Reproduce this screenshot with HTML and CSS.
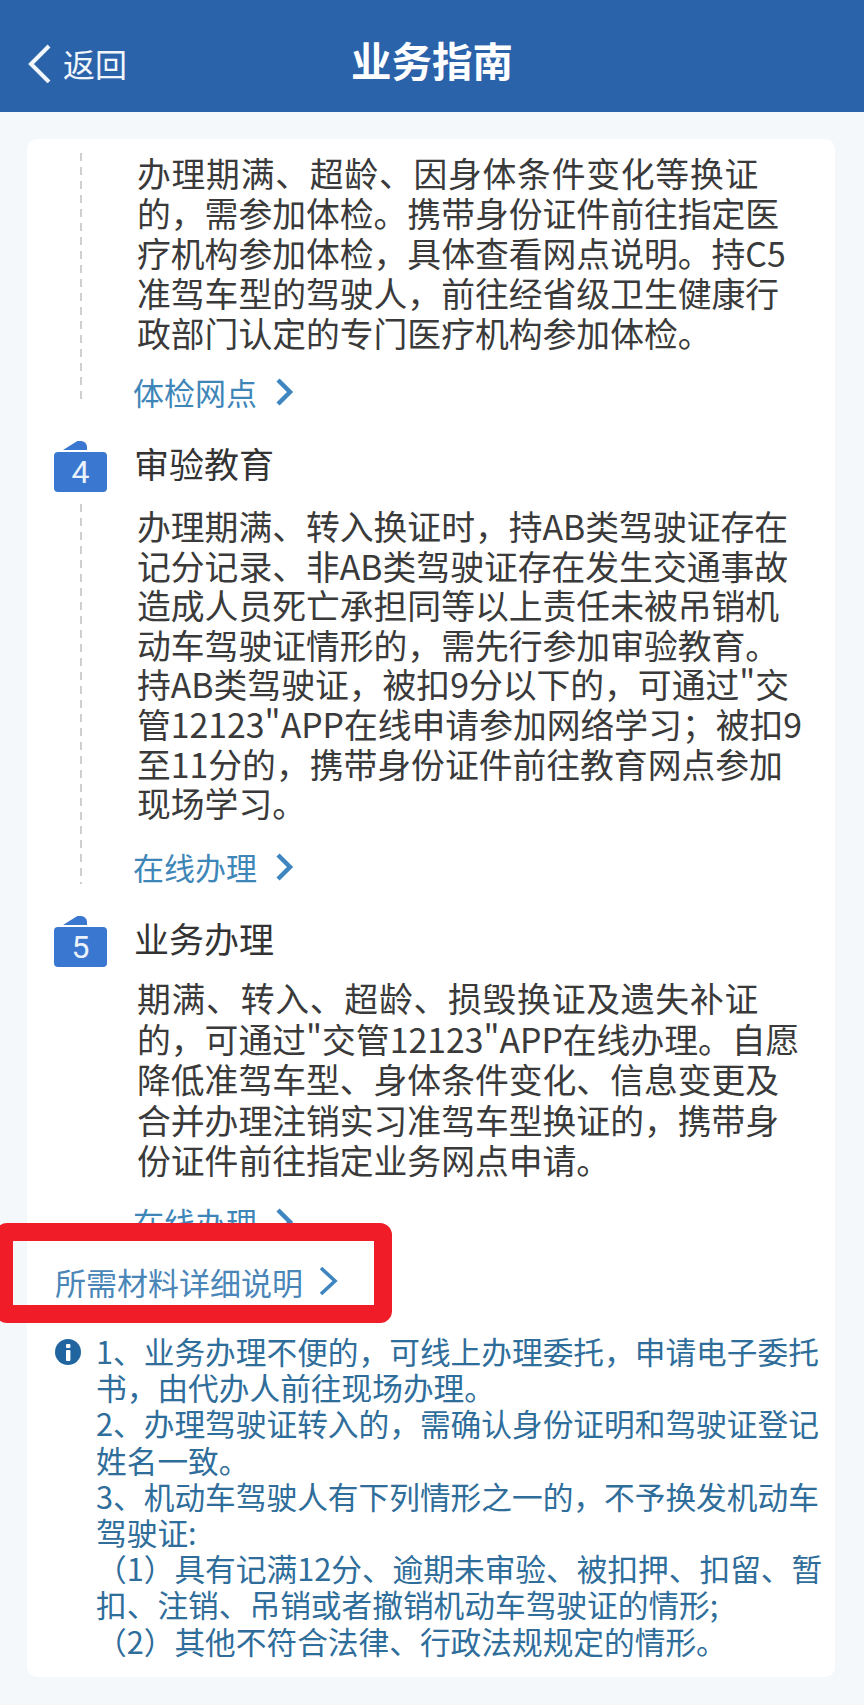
FILE: index.html
```html
<!DOCTYPE html>
<html lang="zh-CN">
<head>
<meta charset="utf-8">
<title>业务指南</title>
<link rel="stylesheet" href="styles.css">
</head>
<body>
<header class="topbar">
  <a class="back">
    <svg class="back-icon" viewBox="0 0 26 40"><path d="M23 3 L5 21 L23 39"/></svg>
    <span>返回</span>
  </a>
  <h1 class="title">业务指南</h1>
</header>
<main class="card">
  <section class="step step-first">
    <div class="rail"><div class="dash dash-first"></div></div>
    <div class="content">
      <p class="body"><span class="loose">办理期满、超龄、因身体条件变化等换证</span><br>的，需参加体检。携带身份证件前往指定医<br>疗机构参加体检，具体查看网点说明。持C5<br>准驾车型的驾驶人，前往经省级卫生健康行<br>政部门认定的专门医疗机构参加体检。</p>
      <a class="link">体检网点<svg class="chev" viewBox="0 0 20 30"><path d="M4 3 L16 15 L4 27"/></svg></a>
    </div>
  </section>
  <section class="step step-mid">
    <div class="rail">
      <div class="badge">4</div>
      <div class="dash dash-mid"></div>
    </div>
    <div class="content">
      <h2 class="step-title">审验教育</h2>
      <p class="body body-mid">办理期满、转入换证时，持AB类驾驶证存在<br>记分记录、非AB类驾驶证存在发生交通事故<br>造成人员死亡承担同等以上责任未被吊销机<br>动车驾驶证情形的，需先行参加审验教育。<br>持AB类驾驶证，被扣9分以下的，可通过"交<br>管12123"APP在线申请参加网络学习；被扣9<br>至11分的，携带身份证件前往教育网点参加<br>现场学习。</p>
      <a class="link">在线办理<svg class="chev" viewBox="0 0 20 30"><path d="M4 3 L16 15 L4 27"/></svg></a>
    </div>
  </section>
  <section class="step step-last">
    <div class="rail">
      <div class="badge">5</div>
    </div>
    <div class="content">
      <h2 class="step-title">业务办理</h2>
      <p class="body body-last"><span class="loose">期满、转入、超龄、损毁换证及遗失补证</span><br>的，可通过"交管12123"APP在线办理。自愿<br>降低准驾车型、身体条件变化、信息变更及<br>合并办理注销实习准驾车型换证的，携带身<br>份证件前往指定业务网点申请。</p>
      <a class="link">在线办理<svg class="chev" viewBox="0 0 20 30"><path d="M4 3 L16 15 L4 27"/></svg></a>
    </div>
  </section>
  <div class="materials">
    <a class="materials-link">所需材料详细说明<svg class="chev chev-thin" viewBox="0 0 20 30"><path d="M3 2 L17 15 L3 28"/></svg></a>
    <div class="highlight"></div>
  </div>
  <section class="notice">
    <svg class="info" viewBox="0 0 26 26"><circle cx="13" cy="13" r="13"/><rect x="11" y="5" width="4.4" height="4" rx="1"/><rect x="11" y="11" width="4.4" height="11" rx="1"/></svg>
    <p class="notice-text">1、业务办理不便的，可线上办理委托，申请电子委托<br>书，由代办人前往现场办理。<br>2、办理驾驶证转入的，需确认身份证明和驾驶证登记<br>姓名一致。<br>3、机动车驾驶人有下列情形之一的，不予换发机动车<br>驾驶证:<br>（1）具有记满12分、逾期未审验、被扣押、扣留、暂<br>扣、注销、吊销或者撤销机动车驾驶证的情形;<br>（2）其他不符合法律、行政法规规定的情形。</p>
  </section>
</main>
</body>
</html>
```
FILE: styles.css
```css
* { box-sizing: border-box; }
html, body { margin: 0; padding: 0; }
body {
  width: 864px;
  height: 1705px;
  overflow: hidden;
  background: #f4f8fa;
  font-family: "Noto Sans CJK SC", "Noto Sans", sans-serif;
}
.topbar {
  height: 112px;
  background: #2b63ab;
  color: #fff;
  display: flex;
  align-items: center;
  justify-content: center;
  position: relative;
}
.back {
  position: absolute;
  left: 26px;
  top: 43px;
  display: flex;
  align-items: center;
  gap: 11px;
  font-size: 32px;
  line-height: 40px;
  color: #f2f6fb;
}
.back-icon { width: 26px; height: 40px; fill: none; stroke: #f2f6fb; stroke-width: 4; }
.title {
  margin: 8px 0 0;
  font-size: 40.5px;
  line-height: 48px;
  font-weight: 700;
}
.card {
  margin: 27px 29px 0 27px;
  height: 1538px;
  background: #fff;
  border-radius: 10px;
  position: relative;
}
.step { display: grid; grid-template-columns: 110px 1fr; }
.rail { padding-left: 27px; display: flex; flex-direction: column; }
.dash {
  flex: 1;
  margin-left: 26px;
  width: 2px;
  background: repeating-linear-gradient(to bottom, #cfcfcf 0 8px, transparent 8px 14px);
}
.dash-first { margin-bottom: 38px; }
.dash-mid { margin-top: 12px; margin-bottom: 32px; }
.step-first { height: 302px; padding-top: 14px; }
.step-mid { height: 475px; }
.step-last { height: 302px; }
.content { white-space: nowrap; }
.body {
  margin: 0;
  font-size: 33.8px;
  line-height: 39.9px;
  color: #3a3a3a;
}
.loose { letter-spacing: 0.76px; }
.body-mid { line-height: 39.6px; margin-top: 21px; }
.body-last { line-height: 40.6px; margin-top: 18px; }
.link {
  display: flex;
  align-items: center;
  margin: 19px 0 0 -4px;
  font-size: 31px;
  line-height: 40px;
  color: #3f86b8;
}
.body-mid + .link { margin-top: 24px; }
.body-last + .link { margin-top: 21px; }
.chev { width: 20px; height: 30px; margin-left: 17px; fill: none; stroke: #3f86c0; stroke-width: 4.5; }
.chev-thin { stroke-width: 3.6; margin-left: 15px; }
.step-title {
  margin: 0 0 0 -3px;
  font-size: 35px;
  line-height: 44px;
  font-weight: 400;
  color: #333;
}
.badge {
  width: 53px;
  height: 40px;
  margin-top: 11px;
  border-radius: 4px;
  background: #3a77d0;
  color: #eaf2fb;
  font-size: 32px;
  line-height: 40px;
  text-align: center;
  position: relative;
  font-family: "Roboto", sans-serif;
  flex: none;
}
.badge::before {
  content: "";
  position: absolute;
  left: 9px;
  top: -11px;
  width: 24px;
  height: 9px;
  background: #3a77d0;
  border-radius: 12px 8px 0 0;
  clip-path: polygon(0 100%, 60% 0, 100% 0, 100% 100%);
}
.materials { position: relative; height: 115px; }
.materials-link {
  position: absolute;
  left: 28px;
  top: 0;
  display: flex;
  align-items: center;
  height: 40px;
  margin-top: 43px;
  font-size: 31px;
  color: #4a86b8;
  white-space: nowrap;
}
.highlight {
  position: absolute;
  left: -32px;
  top: 5px;
  width: 397px;
  height: 100px;
  border: 18px solid #f01c27;
  border-radius: 12px;
}
.notice {
  display: flex;
  gap: 3px;
  padding-left: 28px;
}
.info { width: 26px; height: 26px; margin-top: 6px; flex: none; }
.info circle { fill: #20659f; }
.info rect { fill: #fff; }
.notice-text {
  margin: 0 0 0 12px;
  font-size: 30.7px;
  line-height: 36.2px;
  color: #2f6d9a;
  white-space: nowrap;
}
```
